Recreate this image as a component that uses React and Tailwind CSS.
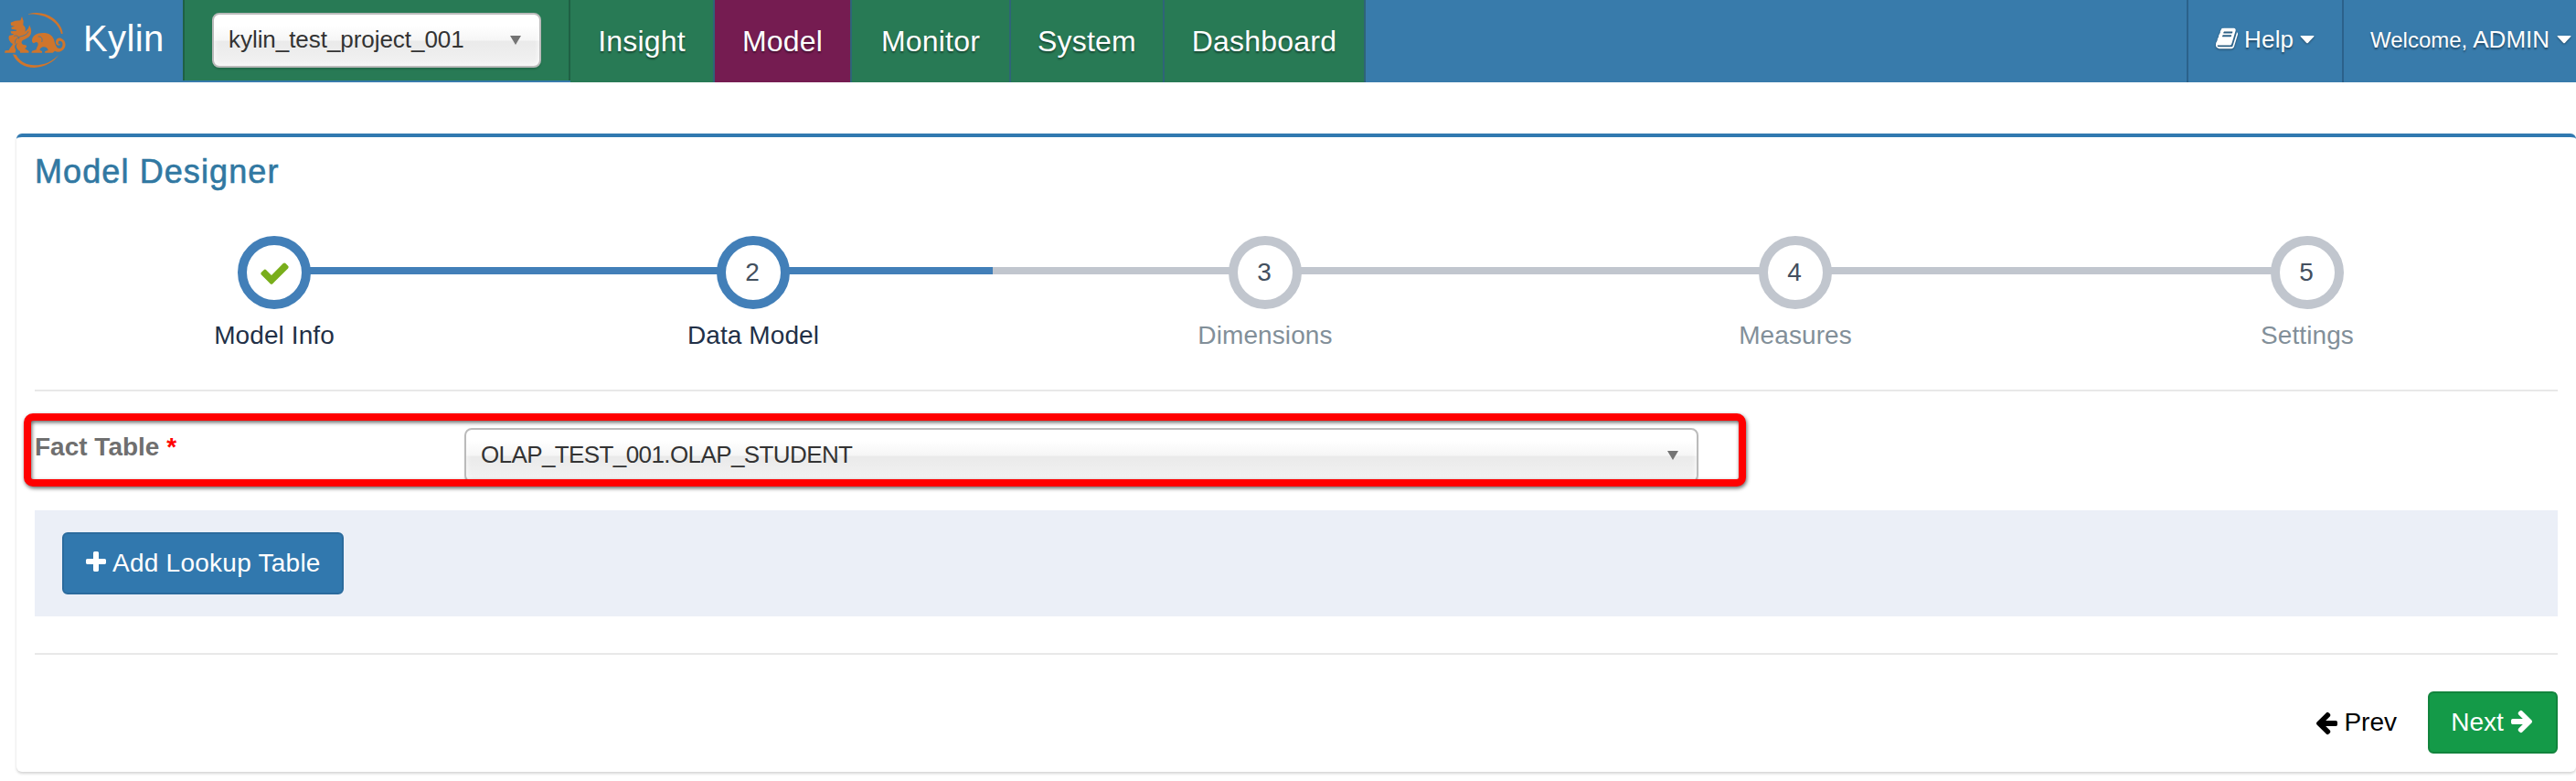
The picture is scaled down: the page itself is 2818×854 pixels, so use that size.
import React from "react";

const ICONS = {
  left: "M1664 896v128q0 53-32.5 90.5t-84.5 37.5h-704l293 294q38 36 38 90t-38 90l-75 76q-37 37-90 37-52 0-91-37l-651-652q-37-37-37-90 0-52 37-91l651-650q38-38 91-38 52 0 90 38l75 74q38 38 38 91t-38 91l-293 293h704q52 0 84.5 37.5t32.5 90.5z",
  plus: "M1600 736v192q0 40-28 68t-68 28h-416v416q0 40-28 68t-68 28h-192q-40 0-68-28t-28-68v-416h-416q-40 0-68-28t-28-68v-192q0-40 28-68t68-28h416v-416q0-40 28-68t68-28h192q40 0 68 28t28 68v416h416q40 0 68 28t28 68z",
  check:
    "M1671 566q0 40-28 68l-724 724-136 136q-28 28-68 28t-68-28l-136-136-362-362q-28-28-28-68t28-68l136-136q28-28 68-28t68 28l294 295 656-657q28-28 68-28t68 28l136 136q28 28 28 68z",
  book: "M1703 478q40 57 18 129l-275 906q-19 64-76.5 107.5t-122.500 43.500h-923q-77 0-148.500-53.500t-99.500-131.500q-24-67-2-127 0-4 3-27t4-37q1-8-3-21.500t-3-19.500q2-11 8-21t16.500-23.500 16.500-23.500q23-38 45-91.500t30-91.500q3-10 .5-30t-.5-28q3-11 17-28t17-23q21-36 42-92t25-90q1-9-2.500-32t.5-28q4-13 22-30.500t22-22.500q19-26 42.500-84.500t27.500-96.500q1-8-3-25.500t-2-26.500q2-8 9-18t18-23 17-21q8-12 16.500-30.500t15-35 16-36 19.500-32 26.500-23.500 36-11.500 47.500 5.500l-1 3q38-9 51-9h761q74 0 114 56t18 130l-274 906q-36 119-71.500 153.500t-128.500 34.500h-869q-27 0-38 15-11 16-1 43 24 70 144 70h923q29 0 56-15.500t35-41.500l300-987q7-22 5-57 38 15 59 43zm-1064 2q-4 13 2 22.500t20 9.500h608q13 0 25.500-9.500t16.500-22.500l21-64q4-13-2-22.500t-20-9.500h-608q-13 0-25.500 9.500t-16.500 22.500zm-83 256q-4 13 2 22.500t20 9.500h608q13 0 25.500-9.500t16.500-22.500l21-64q4-13-2-22.500t-20-9.500h-608q-13 0-25.500 9.500t-16.500 22.500z",
};

function Icon({ name, className }) {
  return (
    <svg viewBox="0 0 1792 1792" fill="currentColor" className={"shrink-0 " + className}>
      <path d={ICONS[name]} />
    </svg>
  );
}

function Caret({ className }) {
  return (
    <svg viewBox="0 0 16 9" fill="currentColor" className={"h-[9px] w-4 shrink-0 " + className}>
      <path d="M1.200 0H14.800Q16 0 15.300 1.100L8.800 7.900Q8 8.700 7.200 7.900L.7 1.100Q0 0 1.200 0z" />
    </svg>
  );
}

function Logo() {
  return (
    <svg viewBox="0 0 216 228" className="h-[76px] w-[72px] shrink-0 text-[#cf752c]" fill="currentColor">
      <path d="M93 46C120 37 152 42 175 60C195 76 205 95 206 110L201 112C197 94 186 78 170 67C148 51 122 45 93 47Z" />
      <path d="M42 178C52 205 80 222 112 222C145 220 178 204 193 180C172 202 145 214 112 214C88 213 66 204 53 180Z" />
      <path d="M35 74L50 68L67 67L72 54L77 69L76 82C84 89 85 96 82 104C91 98 96 90 96 82C103 93 105 107 99 116C94 124 83 127 75 132C67 138 71 147 83 148C90 149 88 158 81 159L95 168L94 173L66 173V168C53 160 50 150 58 141C48 146 46 155 52 163L50 173H15L17 166L29 165C32 156 40 151 42 144C31 138 26 126 30 117L46 113L36 109L35 103L54 101V98L38 95L37 89L48 86L36 83Z" />
      <path d="M103 173L105 167L119 163C119 157 125 151 125 145C125 138 118 136 114 140C111 143 106 141 105 135C104 119 119 108 141 108C161 108 172 116 177 130C181 146 185 159 195 159C203 159 207 151 205 141C202 133 191 132 191 140C191 145 195 147 198 144C198 151 186 151 183 141C182 129 191 122 201 126C214 131 218 146 212 157C205 170 190 174 180 167L173 173H147L148 168L158 165C157 157 150 153 141 154C135 155 132 159 130 164L138 168V173Z" />
      <path
        d="M93 103C89 114 80 116 70 119C54 124 47 132 50 143M46 118C56 115 64 120 62 128M125 120C136 118 141 128 137 138"
        fill="none"
        stroke="#387bab"
        strokeWidth="2.500"
      />
    </svg>
  );
}

function Select({ label, className, textClass }) {
  return (
    <div
      className={
        "flex h-[60px] items-center justify-between rounded-lg border-2 border-[#bbbbbb] bg-[linear-gradient(to_bottom,#ffffff_20%,#f6f6f6_50%,#eaeaea_52%,#f2f2f2_100%)] pl-4 text-[26px] text-[#333] shadow-[0_2px_2px_rgba(0,0,0,0.12),inset_0_0_6px_#fff] " +
        className
      }
    >
      <span className={"-mt-0.5 leading-[56px] whitespace-nowrap " + textClass}>{label}</span>
      <svg viewBox="0 0 12 10" className="mb-px h-2.5 w-3 shrink-0" fill="#747474">
        <path d="M0 0h12L6 10z" />
      </svg>
    </div>
  );
}

const NAV = [
  { label: "Insight", box: "w-[158px]" },
  { label: "Model", box: "w-[150px]", active: true },
  { label: "Monitor", box: "w-[174px]" },
  { label: "System", box: "w-[168px]" },
  { label: "Dashboard", box: "w-[220px]" },
];

function Header() {
  return (
    <header className="flex h-[90px] bg-[#387bab] text-white">
      <div className="flex w-[200px] shrink-0">
        <Logo />
        <span className="ml-[19px] text-[40px] leading-[84px] tracking-[0.4px]">Kylin</span>
      </div>
      <div className="h-[88px] w-[424px] shrink-0 border-x-2 border-[#1f6044] bg-[#287a55] pt-3.5 pl-[30px]">
        <Select label="kylin_test_project_001" className="w-[360px] pr-5" textClass="tracking-[-0.05px]" />
      </div>
      <nav className="flex">
        {NAV.map((n) => (
          <a
            key={n.label}
            className={
              "border-r-2 border-[#2f6478] text-center text-[32px] leading-[90px] tracking-[0.2px] [text-shadow:0_2px_2px_rgba(0,0,0,0.4)] " +
              n.box +
              (n.active ? " bg-[#751c51]" : " bg-[#287a55]")
            }
          >
            {n.label}
          </a>
        ))}
      </nav>
      <div className="ml-auto flex text-[26px] leading-[86px] [text-shadow:0_2px_2px_rgba(0,0,0,0.4)]">
        <a className="flex w-[170px] border-l-2 border-[#2b618b] pl-[29px]">
          <Icon name="book" className="mt-[29px] h-[26px] w-[26px] drop-shadow-[0_1px_1px_rgba(0,0,0,0.4)]" />
          <span className="ml-[6px] tracking-[0.2px]">Help</span>
          <Caret className="mt-[39px] ml-[7px] drop-shadow-[0_1px_1px_rgba(0,0,0,0.4)]" />
        </a>
        <a className="flex w-[256px] border-l-2 border-[#2b618b] pl-[29px] whitespace-nowrap">
          <span className="flex items-baseline">
            <span className="text-2xl leading-[86px]">Welcome,</span>
            <span className="ml-[6px]">ADMIN</span>
          </span>
          <Caret className="mt-[39px] mr-[5px] ml-auto drop-shadow-[0_1px_1px_rgba(0,0,0,0.4)]" />
        </a>
      </div>
    </header>
  );
}

const BLUE = "bg-[#427fb8]";
const GRAY = "bg-[#c1c6ce]";
const STEPS = [
  { n: 1, label: "Model Info", box: "w-[524px]", left: "", right: BLUE, on: true, done: true },
  { n: 2, label: "Data Model", box: "w-[524px]", left: BLUE, right: BLUE, on: true },
  { n: 3, label: "Dimensions", box: "w-[596px]", left: GRAY, right: GRAY },
  { n: 4, label: "Measures", box: "w-[564px]", left: GRAY, right: GRAY },
  { n: 5, label: "Settings", box: "w-[556px]", left: GRAY, right: "" },
];

function Stepper() {
  return (
    <ol className="flex h-[214px] pt-[46px]">
      {STEPS.map((s) => (
        <li key={s.n} className={"flex shrink-0 flex-col " + s.box}>
          <div className="flex items-center">
            <span className={"-mr-1 mb-1 h-2 grow " + s.left} />
            <span
              className={
                "z-10 flex h-20 w-20 items-center justify-center rounded-full border-[10px] bg-white text-[28px] text-[#434f5e] " +
                (s.on ? "border-[#427fb8]" : "border-[#c1c6ce]")
              }
            >
              {s.done ? (
                <Icon name="check" className="h-[35px] w-[35px] text-[#79ae1b]" />
              ) : (
                <span className="pr-0.5">{s.n}</span>
              )}
            </span>
            <span className={"mb-1 -ml-1 h-2 grow " + s.right} />
          </div>
          <span
            className={
              "mt-[13px] text-center text-[28px] leading-8 tracking-[0.1px] " +
              (s.on ? "text-[#223047]" : "text-[#828f99]")
            }
          >
            {s.label}
          </span>
        </li>
      ))}
    </ol>
  );
}

export default function App() {
  return (
    <div className="h-[854px] w-[2818px] overflow-hidden bg-white font-['Liberation_Sans',Arial,sans-serif]">
      <Header />
      <main className="mt-14 ml-[18px] h-[698px] rounded-[6px] border-t-4 border-[#3179b0] bg-white px-5 shadow-[0_2px_3px_rgba(0,0,0,0.17)]">
        <h1 className="h-[62px] pt-[18px] text-[36px] leading-[40px] tracking-[1.1px] text-[#3178a2] [-webkit-text-stroke:0.6px_#3178a2]">
          Model Designer
        </h1>
        <Stepper />
        <div className="h-0.5 bg-[#e8e8e8]" />

        <div className="relative mt-6 flex h-20">
          <label className="w-[470px] text-[28px] leading-[73px] font-bold text-[#6f6f6f]">
            Fact Table <span className="text-[#ff0000]">*</span>
          </label>
          <Select label="OLAP_TEST_001.OLAP_STUDENT" className="mt-4 w-[1350px] pr-5" textClass="tracking-[-0.6px]" />
          <div className="absolute top-0 -left-3 h-20 w-[1884px] rounded-[10px] border-8 border-[#ff0000] drop-shadow-[1px_2px_2px_rgba(0,0,0,0.6)]" />
        </div>

        <div className="mt-[26px] h-[116px] bg-[#ebeff7] px-[30px] pt-6">
          <button className="flex h-[68px] w-[308px] items-center rounded-md border-2 border-[#2b6b9d] bg-[#3178ae] pl-[21px] text-[28px] whitespace-nowrap text-white">
            <Icon name="plus" className="mb-0.5 h-7 w-7" />
            <span className="ml-1 tracking-[0.25px]">Add Lookup Table</span>
          </button>
        </div>

        <div className="mt-10 h-0.5 bg-[#e8e8e8]" />
        <div className="mt-10 flex justify-end text-[28px]">
          <button className="mr-[34px] flex h-[68px] items-center text-black">
            <Icon name="left" className="h-7 w-7" />
            <span className="ml-[5px]">Prev</span>
          </button>
          <button className="flex h-[68px] w-[142px] items-center justify-center rounded-md border-2 border-[#12843d] bg-[#149a48] text-white">
            <span>Next</span>
            <Icon name="left" className="ml-1.5 h-7 w-7 rotate-180" />
          </button>
        </div>
      </main>
    </div>
  );
}
